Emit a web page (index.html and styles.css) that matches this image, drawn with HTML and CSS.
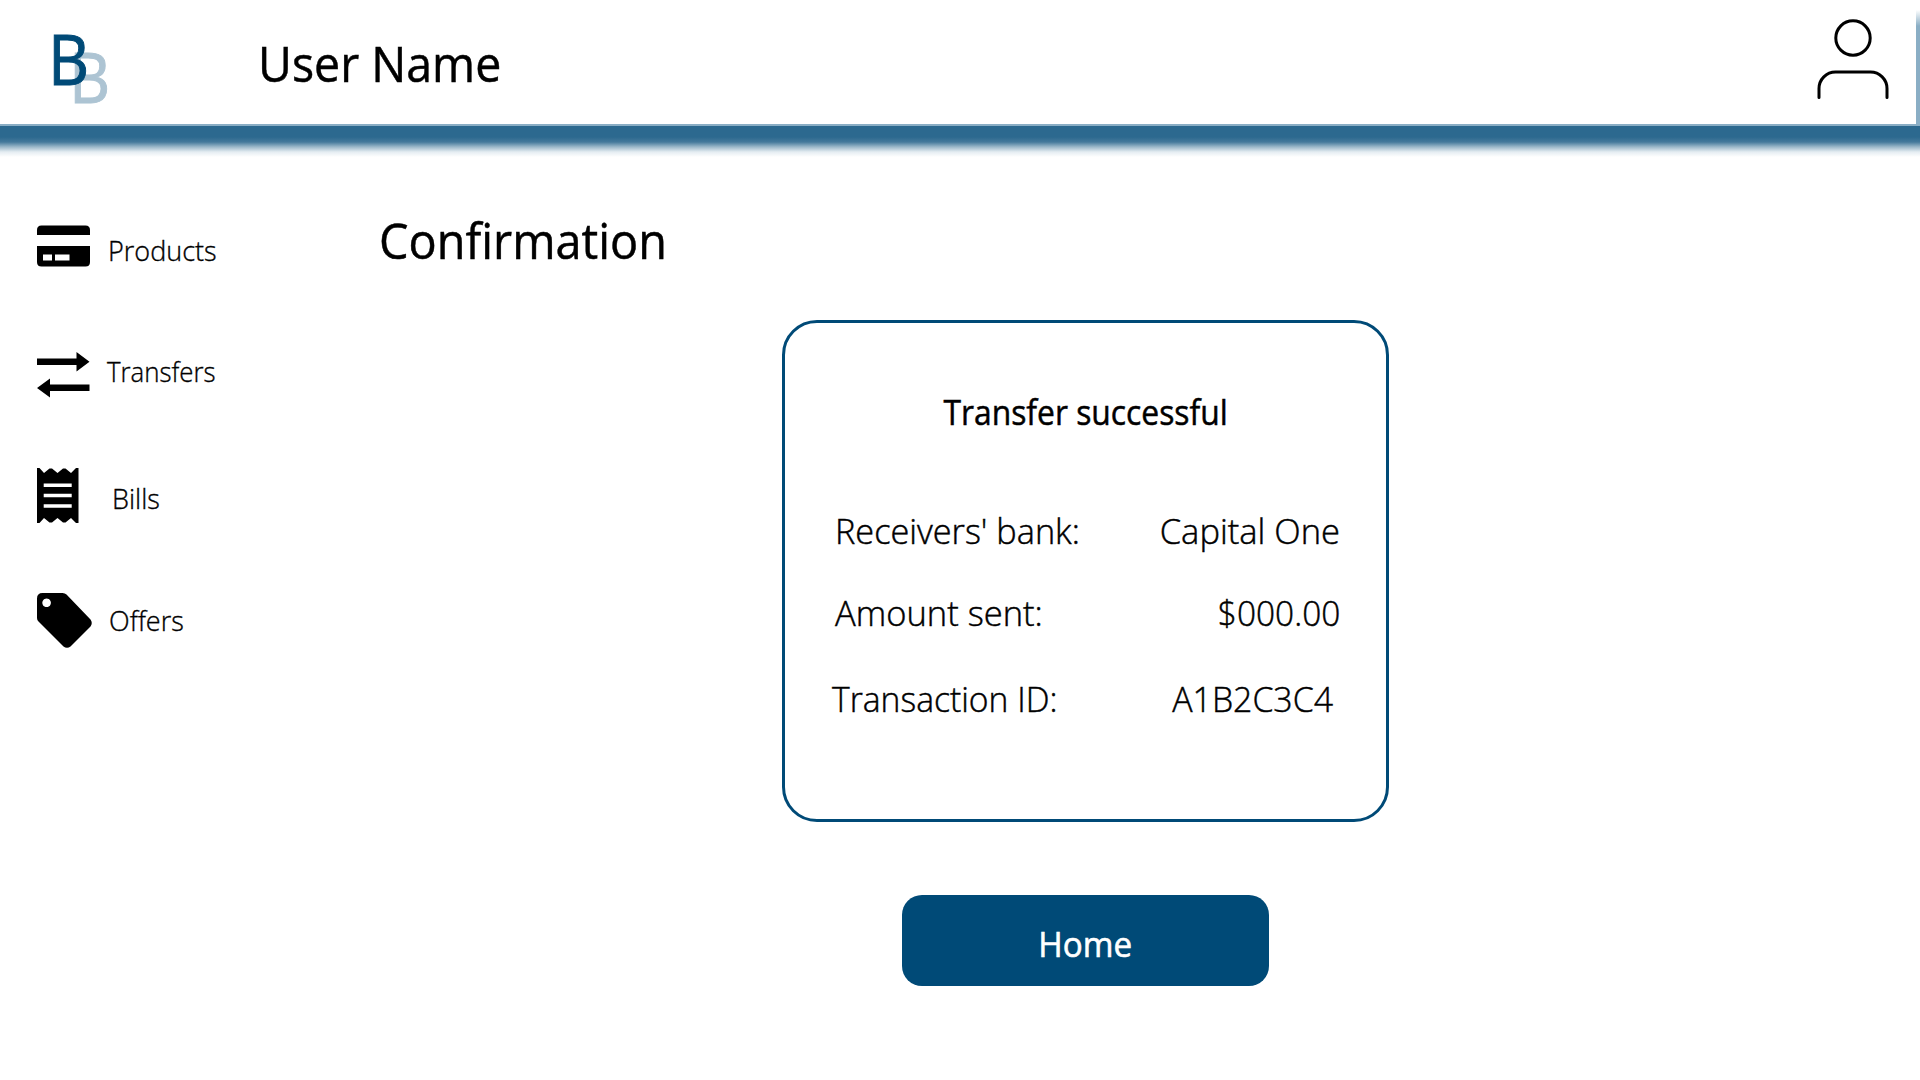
FILE: index.html
```html
<!DOCTYPE html>
<html lang="en">
<head>
<meta charset="utf-8">
<title>Confirmation</title>
<link rel="stylesheet" href="styles.css">
</head>
<body>
<header class="topbar">
  <div class="logo"><span class="logo-front">B</span><span class="logo-back">B</span></div>
  <div class="user-name"><span>User Name</span></div>
  <svg class="avatar" width="72" height="82" viewBox="0 0 72 82" fill="none" stroke="#000" stroke-width="3" stroke-linecap="round"><circle cx="36" cy="19" r="17.2"/><path d="M2 78.500V69.500A16.500 16.500 0 0 1 18.500 53H53.500A16.500 16.500 0 0 1 70 69.500V78.500"/></svg>
</header>
<div class="divider"></div>
<div class="layout">
  <nav class="sidebar">
    <a class="item products"><svg width="53" height="42" viewBox="0 0 53 42"><path d="M0 10V5Q0 .5 4.500 .5H48.500Q53 .5 53 5V10ZM0 21H53V37Q53 41.500 48.500 41.500H4.500Q0 41.500 0 37Z"/><path fill="#fff" d="M6 29.500h9v6H6zM18 29.500h14.500v6H18z"/></svg><span>Products</span></a>
    <a class="item transfers"><svg width="53" height="46" viewBox="0 0 53 46"><path d="M0 6.500H39.500V0L52.500 9.800L39.500 19.500V13H0ZM52.500 32.500H13V26.500L0 36L13 45.500V39H52.500Z"/></svg><span>Transfers</span></a>
    <a class="item bills"><svg width="42" height="55" viewBox="0 0 42 55"><path d="M0 0H2.500L7 5L12.500 .5H15L20.500 5L26 .5H28.500L34 5L39 0H41.500V55H39L34 50L28.500 54.500H26L20.500 50L15 54.500H12.500L7 50L2.500 55H0Z"/><path stroke="#fff" stroke-width="3.500" d="M6.700 17.200H34.700M6.700 27.500H34.700M6.700 38H34.700"/></svg><span>Bills</span></a>
    <a class="item offers"><svg width="55" height="55" viewBox="0 0 55 55"><path fill-rule="evenodd" d="M0 5.500Q0 0 5.500 0H25.500Q28 0 29.500 1.500L53.500 26.500Q56 30 53.500 33.500L33.500 53.500Q30 56 26.500 53.500L1.500 28.500Q0 27 0 25ZM9.600 5.500a4.300 4.300 0 1 0 .01 0Z"/></svg><span>Offers</span></a>
  </nav>
  <main class="content">
    <h1 class="title"><span>Confirmation</span></h1>
    <section class="card">
      <h2 class="card-title"><span>Transfer successful</span></h2>
      <div class="row bank"><span class="label">Receivers' bank:</span><span class="value">Capital One</span></div>
      <div class="row amount"><span class="label">Amount sent:</span><span class="value">$000.00</span></div>
      <div class="row transaction"><span class="label">Transaction ID:</span><span class="value">A1B2C3C4</span></div>
    </section>
    <button class="home"><span>Home</span></button>
  </main>
</div>
</body>
</html>
```
FILE: styles.css
```css
* { box-sizing: border-box; }
body { margin: 0; height: 1080px; overflow: hidden; background: #fff; color: #000; font-family: "Open Sans", "Noto Sans", sans-serif; }
span { display: inline-block; transform-origin: left; }

.topbar { position: relative; display: flex; align-items: flex-start; height: 124px; padding: 0 31px 0 47px; }
.topbar::after { content: ""; position: absolute; top: 0; right: 0; width: 4px; height: 124px; background: linear-gradient(#fff 10px, #8aaec5 26px); }
.logo { position: relative; width: 210px; height: 124px; font-size: 70px; line-height: 80px; color: #004a77; -webkit-text-stroke: 1px; }
.logo span { position: absolute; transform: scaleX(.91); }
.logo-front { left: 1px; top: 18px; z-index: 1; }
.logo-back { left: 22px; top: 36px; color: #adc4d3; }
.user-name { flex: 1; margin-top: 33px; font-size: 50px; line-height: 60px; -webkit-text-stroke: .5px; }
.user-name span { transform: translateX(1px) scaleX(.93); }
.avatar { margin-top: 19px; }
.divider { height: 34px; background: linear-gradient(#8aaec5 2px, #2c698f 2px, #2c698f 13px, #44799b 18px, #9db9ca 23px, #e5edf2 28px, #fff 33px); }

.layout { display: flex; height: 922px; }
.sidebar { display: grid; grid-template-rows: 127px 116px 125px 55px; align-content: start; width: 379px; padding: 67px 0 0 37px; }
.item { display: flex; align-items: flex-start; gap: 18px; font-size: 27px; font-weight: 300; line-height: 36px; -webkit-text-stroke: .35px; }
.item svg { -webkit-text-stroke: 0; }
.products span { margin-top: 8px; }
.transfers { gap: 17px; }
.transfers span { margin-top: 2px; transform: scaleX(.957); }
.bills { gap: 33px; }
.bills span { margin-top: 13px; }
.offers { gap: 17px; }
.offers span { margin-top: 10px; }

.content { flex: 1; }
.title { margin: 52px 0 0; font-size: 50px; font-weight: 400; line-height: 60px; -webkit-text-stroke: .5px; }
.title span { transform: scaleX(.937); }
.card { width: 607px; height: 502px; margin: 50px 0 0 403px; padding: 68px 46px 0 47px; border: 3px solid #004a77; border-radius: 35px; }
.card-title { margin: 0 0 80px; font-size: 35.5px; font-weight: 400; line-height: 40px; text-align: center; -webkit-text-stroke: .5px; }
.card-title span { transform: scaleX(.896); transform-origin: center; }
.row { display: flex; justify-content: space-between; font-size: 34.5px; font-weight: 300; line-height: 40px; -webkit-text-stroke: .45px; }
.value { transform-origin: right; }
.bank { margin-bottom: 42px; padding-left: 3px; }
.bank .label { transform: scaleX(.993); }
.amount { margin-bottom: 46px; padding-left: 3px; }
.amount .value { transform: scaleX(.97); }
.transaction { padding-right: 7px; }
.transaction .label { transform: scaleX(.976); }
.transaction .value { transform: scaleX(.98); }
.home { display: block; width: 367px; height: 91px; margin: 73px 0 0 523px; padding: 5px 0 0; border: 0; border-radius: 20px; background: #004a77; color: #fff; font: 400 35.5px/40px "Open Sans", sans-serif; -webkit-text-stroke: .6px; }
.home span { transform: scaleX(.935); transform-origin: center; }
```
